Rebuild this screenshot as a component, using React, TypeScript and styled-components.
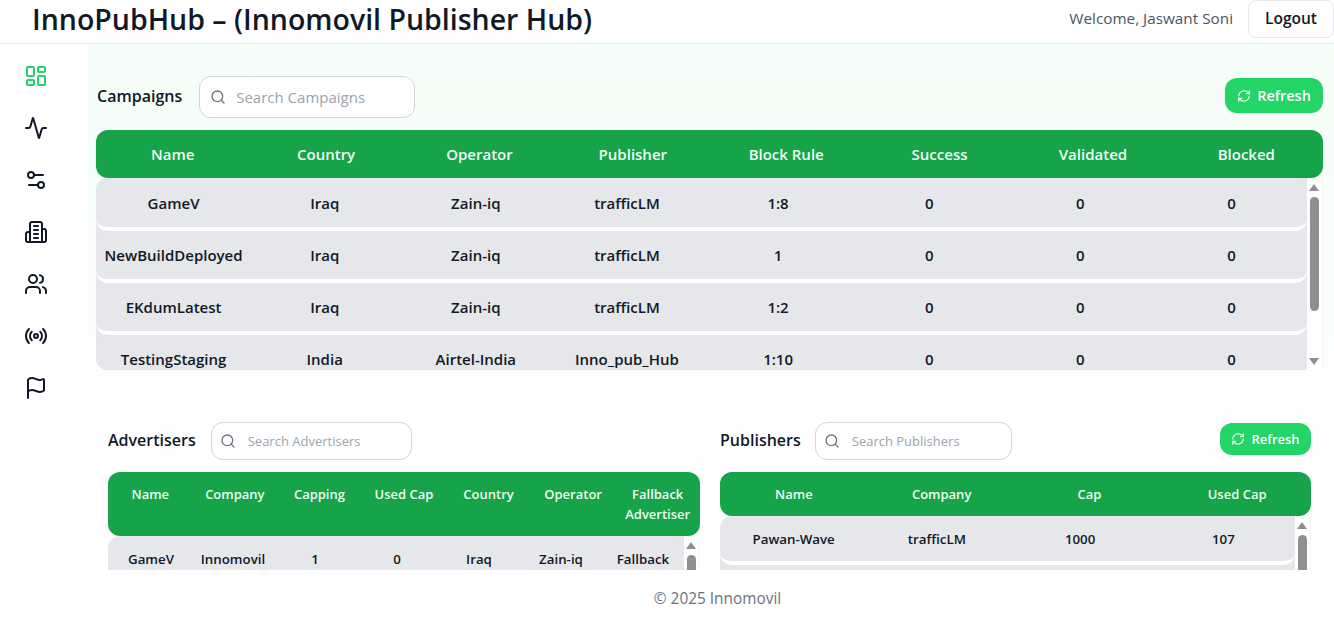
import React from 'react';
import styled, { createGlobalStyle } from 'styled-components';
import { LayoutDashboard, Activity, Settings2, Users, Radio, Flag, Search, RefreshCw } from 'lucide-react';

const Global = createGlobalStyle`
  html, body { margin: 0; height: 626px; overflow: hidden; background: #fff; }
  body { font-family: "Open Sans", "Noto Sans", "Liberation Sans", sans-serif; color: #111827; }
  * { box-sizing: border-box; }
`;

const Page = styled.div`
  height: 626px;
  display: flex;
  flex-direction: column;
  overflow: hidden;
`;
const TopBar = styled.header`
  height: 44px;
  flex: none;
  display: flex;
  align-items: flex-start;
  justify-content: space-between;
  padding-left: 32px;
  border-bottom: 1px solid #e5e7eb;
`;
const Title = styled.h1`
  margin: 0;
  font-size: 28.5px;
  line-height: 38px;
  font-weight: 600;
  color: #111827;
  white-space: nowrap;
`;
const UserBox = styled.div`
  display: flex;
  align-items: flex-start;
  gap: 15px;
`;
const Welcome = styled.span`
  font-size: 15.3px;
  line-height: 37px;
  color: #4b5563;
`;
const LogoutButton = styled.button`
  width: 86px;
  height: 38px;
  padding: 0 0 2px;
  border: 1px solid #e5e7eb;
  border-radius: 8px;
  background: #fff;
  color: #111827;
  font: 600 15.5px "Open Sans", sans-serif;
`;
const Middle = styled.div`
  flex: 1;
  min-height: 0;
  display: flex;
`;
const Sidebar = styled.nav`
  width: 88px;
  flex: none;
  display: flex;
  flex-direction: column;
  align-items: center;
  gap: 28px;
  padding: 20px 16px 0 0;
  background: #fff;
`;
const NavIcon = styled.span<{ $active?: boolean }>`
  display: block;
  width: 24px;
  height: 24px;
  color: ${p => (p.$active ? '#22d467' : '#111827')};
`;
const Main = styled.main`
  flex: 1;
  min-width: 0;
  overflow: hidden;
  padding: 32px 11px 0 8px;
  background: linear-gradient(180deg, #f4fdf7 0%, #fafefb 50%, #ffffff 80%);
`;
const SectionHead = styled.div<{ $small?: boolean }>`
  display: flex;
  align-items: center;
  height: ${p => (p.$small ? '38px' : '42px')};
  margin-bottom: 12px;
`;
const SectionTitle = styled.h2<{ $indent?: number }>`
  margin: 0 0 0 ${p => p.$indent ?? 0}px;
  padding-bottom: 2px;
  font-size: 16px;
  font-weight: 600;
  white-space: nowrap;
  color: #111827;
`;
const SearchBox = styled.label<{ $w: number; $ml: number; $small?: boolean }>`
  width: ${p => p.$w}px;
  height: 100%;
  margin-left: ${p => p.$ml}px;
  display: flex;
  align-items: center;
  gap: ${p => (p.$small ? '10px' : '8px')};
  padding-left: ${p => (p.$small ? '8px' : '10px')};
  border: 1px solid #d1d5db;
  border-radius: 12px;
  background: #fff;
  color: #6b7280;
`;
const SearchInput = styled.input<{ $small?: boolean }>`
  flex: 1;
  min-width: 0;
  border: 0;
  outline: 0;
  background: transparent;
  font: 400 ${p => (p.$small ? '13px' : '15px')} "Open Sans", sans-serif;
  color: #111827;
  &::placeholder { color: #9ca3af; opacity: 1; }
`;
const RefreshButton = styled.button<{ $small?: boolean }>`
  margin-left: auto;
  align-self: flex-start;
  margin-top: ${p => (p.$small ? '1px' : '2px')};
  display: flex;
  align-items: center;
  justify-content: center;
  gap: 6px;
  width: ${p => (p.$small ? '91px' : '98px')};
  height: ${p => (p.$small ? '32px' : '35px')};
  padding: 0;
  border: 0;
  border-radius: 12px;
  background: #22d566;
  color: #fff;
  font: 600 ${p => (p.$small ? '13px' : '14.5px')} "Open Sans", sans-serif;
`;
const TableHead = styled.div<{ $cols: number; $h: number; $small?: boolean }>`
  display: grid;
  grid-template-columns: repeat(${p => p.$cols}, 1fr);
  height: ${p => p.$h}px;
  align-items: ${p => (p.$small ? 'start' : 'center')};
  padding-top: ${p => (p.$small ? '12px' : '0')};
  border-radius: 12px;
  background: #16a34a;
  color: #f0fdf4;
  font-size: ${p => (p.$small ? '13px' : '15px')};
  line-height: 20px;
  font-weight: 600;
  text-align: center;
`;
const TableBody = styled.div<{ $h: number }>`
  height: ${p => p.$h}px;
  display: flex;
`;
const RowsClip = styled.div`
  flex: 1;
  min-width: 0;
  padding-top: 1px;
  overflow: hidden;
  border-radius: 12px 0 0 12px;
  background: #e5e7eb;
`;
const Rail = styled.div`
  flex: none;
  width: 16px;
  display: flex;
  flex-direction: column;
  align-items: center;
  padding: 6px 1px 5px 0;
  background: #fff;
  border-right: 1px solid #f3f4f6;
`;
const RailArrow = styled.span<{ $down?: boolean }>`
  flex: none;
  width: 0;
  height: 0;
  margin-top: ${p => (p.$down ? 'auto' : '0')};
  border-left: 5px solid transparent;
  border-right: 5px solid transparent;
  border-bottom: ${p => (p.$down ? '0' : '7px solid #8f8f8f')};
  border-top: ${p => (p.$down ? '7px solid #8f8f8f' : '0')};
`;
const RailThumb = styled.span<{ $h: number }>`
  flex: none;
  width: 9px;
  height: ${p => p.$h}px;
  margin-top: 6px;
  border-radius: 5px;
  background: #8f8f8f;
`;
const Row = styled.div<{ $cols: number; $h: number; $small?: boolean }>`
  display: grid;
  grid-template-columns: repeat(${p => p.$cols}, 1fr);
  align-items: center;
  height: ${p => p.$h}px;
  padding-left: 2px;
  border-radius: 12px;
  border-bottom: 4px solid #fff;
  background: #e5e7eb;
  color: #111827;
  font-size: ${p => (p.$small ? '13.3px' : '15px')};
  font-weight: 600;
  text-align: center;
  white-space: nowrap;
`;
const LowerGrid = styled.div`
  display: grid;
  grid-template-columns: 592px 591px;
  gap: 20px;
  margin-top: 52px;
  padding-left: 12px;
`;
const Footer = styled.footer`
  height: 56px;
  flex: none;
  padding: 19px 0 0 101px;
  background: #fff;
  color: #6b7280;
  font-size: 15.4px;
  line-height: 20px;
  text-align: center;
`;

function BuildingIcon() {
  return (
    <svg width="24" height="24" viewBox="0 0 24 24" fill="none" stroke="currentColor" strokeWidth="2" strokeLinecap="round" strokeLinejoin="round">
      <path d="M6 22V4a2 2 0 0 1 2-2h8a2 2 0 0 1 2 2v18Z" />
      <path d="M6 12H4a2 2 0 0 0-2 2v6a2 2 0 0 0 2 2h2" />
      <path d="M18 9h2a2 2 0 0 1 2 2v9a2 2 0 0 1-2 2h-2" />
      <path d="M10 6h4" />
      <path d="M10 10h4" />
      <path d="M10 14h4" />
      <path d="M10 18h4" />
    </svg>
  );
}

const campaignCols = ['Name', 'Country', 'Operator', 'Publisher', 'Block Rule', 'Success', 'Validated', 'Blocked'];
const campaigns = [
  ['GameV', 'Iraq', 'Zain-iq', 'trafficLM', '1:8', '0', '0', '0'],
  ['NewBuildDeployed', 'Iraq', 'Zain-iq', 'trafficLM', '1', '0', '0', '0'],
  ['EKdumLatest', 'Iraq', 'Zain-iq', 'trafficLM', '1:2', '0', '0', '0'],
  ['TestingStaging', 'India', 'Airtel-India', 'Inno_pub_Hub', '1:10', '0', '0', '0'],
];
const advertiserCols = ['Name', 'Company', 'Capping', 'Used Cap', 'Country', 'Operator', 'Fallback Advertiser'];
const advertisers = [['GameV', 'Innomovil', '1', '0', 'Iraq', 'Zain-iq', 'Fallback']];
const publisherCols = ['Name', 'Company', 'Cap', 'Used Cap'];
const publishers = [
  ['Pawan-Wave', 'trafficLM', '1000', '107'],
  ['', '', '', ''],
];
const navIcons = [
  <LayoutDashboard size={24} />,
  <Activity size={24} />,
  <Settings2 size={24} />,
  <BuildingIcon />,
  <Users size={24} />,
  <Radio size={24} />,
  <Flag size={24} />,
];

type TableProps = { cols: string[]; rows: string[][]; headH: number; rowH: number; bodyH: number; thumbH: number; small?: boolean };

function DataTable({ cols, rows, headH, rowH, bodyH, thumbH, small }: TableProps) {
  return (
    <>
      <TableHead $cols={cols.length} $h={headH} $small={small}>
        {cols.map(c => <span key={c}>{c}</span>)}
      </TableHead>
      <TableBody $h={bodyH}>
        <RowsClip>
          {rows.map((r, i) => (
            <Row key={i} $cols={cols.length} $h={rowH} $small={small}>
              {r.map((v, j) => <span key={j}>{v}</span>)}
            </Row>
          ))}
        </RowsClip>
        <Rail>
          <RailArrow />
          <RailThumb $h={thumbH} />
          <RailArrow $down />
        </Rail>
      </TableBody>
    </>
  );
}

export default function App() {
  return (
    <Page>
      <Global />
      <TopBar>
        <Title>InnoPubHub – (Innomovil Publisher Hub)</Title>
        <UserBox>
          <Welcome>Welcome, Jaswant Soni</Welcome>
          <LogoutButton>Logout</LogoutButton>
        </UserBox>
      </TopBar>
      <Middle>
        <Sidebar>
          {navIcons.map((icon, i) => (
            <NavIcon key={i} $active={i === 0}>{icon}</NavIcon>
          ))}
        </Sidebar>
        <Main>
          <SectionHead>
            <SectionTitle $indent={1}>Campaigns</SectionTitle>
            <SearchBox $w={216} $ml={17}>
              <Search size={16} />
              <SearchInput placeholder="Search Campaigns" />
            </SearchBox>
            <RefreshButton><RefreshCw size={14} />Refresh</RefreshButton>
          </SectionHead>
          <DataTable cols={campaignCols} rows={campaigns} headH={48} rowH={52} bodyH={192} thumbH={114} />
          <LowerGrid>
            <section>
              <SectionHead $small>
                <SectionTitle>Advertisers</SectionTitle>
                <SearchBox $w={201} $ml={15} $small>
                  <Search size={16} />
                  <SearchInput $small placeholder="Search Advertisers" />
                </SearchBox>
              </SectionHead>
              <DataTable cols={advertiserCols} rows={advertisers} headH={64} rowH={48} bodyH={192} thumbH={100} small />
            </section>
            <section>
              <SectionHead $small>
                <SectionTitle>Publishers</SectionTitle>
                <SearchBox $w={197} $ml={14} $small>
                  <Search size={16} />
                  <SearchInput $small placeholder="Search Publishers" />
                </SearchBox>
                <RefreshButton $small><RefreshCw size={14} />Refresh</RefreshButton>
              </SectionHead>
              <DataTable cols={publisherCols} rows={publishers} headH={44} rowH={48} bodyH={192} thumbH={100} small />
            </section>
          </LowerGrid>
        </Main>
      </Middle>
      <Footer>© 2025 Innomovil</Footer>
    </Page>
  );
}
